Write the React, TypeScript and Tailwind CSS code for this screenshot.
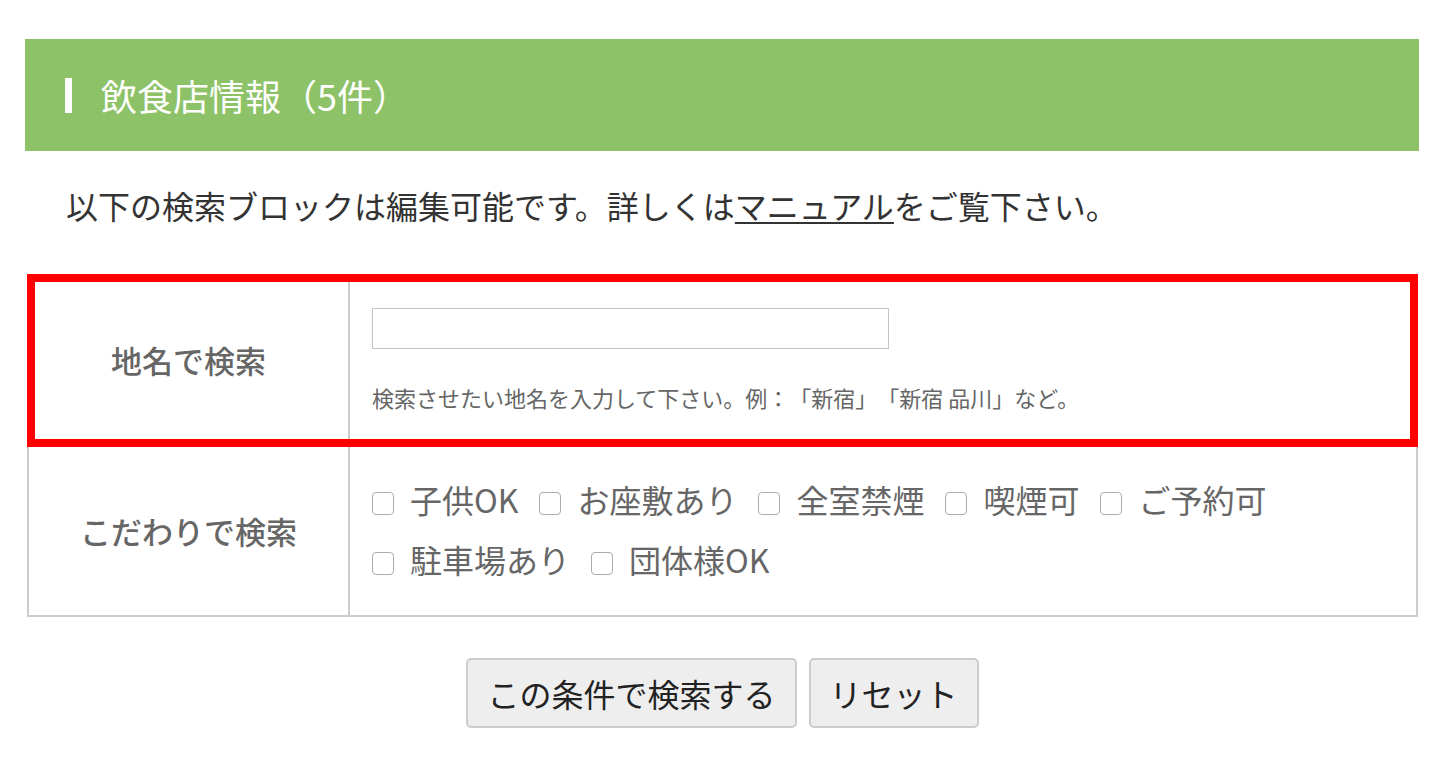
import { useState } from 'react';

const options = [
  ['子供OK', 'お座敷あり', '全室禁煙', '喫煙可', 'ご予約可'],
  ['駐車場あり', '団体様OK'],
];

function Check({ label }: { label: string }) {
  const [checked, setChecked] = useState(false);
  return (
    <label className="flex h-[60px] items-center text-[32px] text-[#666]">
      <input
        type="checkbox"
        checked={checked}
        onChange={(e) => setChecked(e.target.checked)}
        className="mr-[16px] box-border h-[23px] w-[22px] shrink-0 translate-y-[4px] appearance-none rounded-[4px] border border-[#ababab] bg-white checked:bg-[#8dc268]"
      />
      {label}
    </label>
  );
}

export default function App() {
  return (
    <div className="min-h-screen bg-white pt-[39px] font-['Noto_Sans_CJK_JP','Noto_Sans',sans-serif] [text-spacing-trim:space-all]">
      <div className="ml-[25px] flex h-[112px] w-[1394px] items-center bg-[#8dc268] pl-[40px]">
        <span className="h-[35px] w-[7px] bg-white" />
        <h2 className="ml-[29px] flex items-center text-[36px] leading-none font-normal text-white">
          <span>飲食店情報</span>
          <span className="flex w-[36px] justify-end">（</span>
          <span>5件</span>
          <span className="flex w-[36px] justify-start">）</span>
        </h2>
      </div>

      <p className="mt-[30px] ml-[66px] text-[32px] leading-[48px] text-[#333]">
        以下の検索ブロックは編集可能です。詳しくは
        <a className="underline decoration-[2px] underline-offset-[3px]">マニュアル</a>
        をご覧下さい。
      </p>

      <div className="mt-[45px] ml-[27px] w-[1391px] border-2 border-[#ccc]">
        {/* 地名 */}
        <div className="relative flex">
          <div className="flex w-[321px] items-center justify-center border-r-2 border-[#ccc] text-[31px] font-medium text-[#666]">
            地名で検索
          </div>
          <div className="flex-1 pt-[32px] pb-[31px] pl-[22px]">
            <input type="text" className="block h-[41px] w-[517px] border border-[#c4c4c4] bg-white px-2 text-[22px] outline-none" />
            <p className="mt-[32px] text-[22px] leading-[33px] text-[#666]">
              検索させたい地名を入力して下さい。例：「新宿」「新宿 品川」など。
            </p>
          </div>
          <div className="pointer-events-none absolute -inset-[2px] border-[8px] border-[#ff0000]" />
        </div>

        {/* こだわり */}
        <div className="flex border-t-2 border-[#ccc]">
          <div className="flex w-[321px] items-center justify-center border-r-2 border-[#ccc] text-[31px] font-medium text-[#666]">
            こだわりで検索
          </div>
          <div className="flex-1 pt-[22px] pb-[26px] pl-[22px]">
            {options.map((row, i) => (
              <div key={i} className="flex gap-x-[21px]">
                {row.map((o) => (
                  <Check key={o} label={o} />
                ))}
              </div>
            ))}
          </div>
        </div>
      </div>

      <div className="mt-[41px] ml-[27px] flex w-[1391px] justify-center gap-[12px]">
        <button className="h-[70px] rounded-[5px] border-2 border-[#ccc] bg-[#eee] px-[19px] text-[32px] text-[#222]">
          この条件で検索する
        </button>
        <button className="h-[70px] rounded-[5px] border-2 border-[#ccc] bg-[#eee] px-[19px] text-[32px] text-[#222]">
          リセット
        </button>
      </div>
    </div>
  );
}
